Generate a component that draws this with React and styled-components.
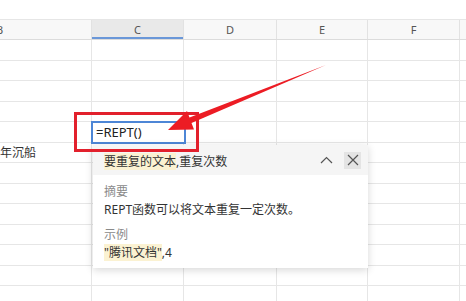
import React from "react";
import styled, { createGlobalStyle } from "styled-components";

const GlobalStyle = createGlobalStyle`
  html, body {
    margin: 0;
    background: #fff;
    font-family: "Noto Sans", "Noto Sans CJK SC", sans-serif;
  }
`;

const COLUMNS = ["B", "C", "D", "E", "F", "G"];
const TEMPLATE = "184px 92px 93px 91px 92px 92px";
const ROW_COUNT = 13;

const Page = styled.div`
  position: relative;
  width: 466px;
  height: 301px;
  padding-top: 19px;
  box-sizing: border-box;
  overflow: hidden;
`;

const Sheet = styled.div`
  display: flex;
  flex-direction: column;
  margin-left: -92px;
`;

const HeaderRow = styled.div`
  display: grid;
  grid-template-columns: ${TEMPLATE};
  height: 21px;
  box-sizing: border-box;
  border-top: 1px solid #e6e6e6;
  border-bottom: 1px solid #dcdcdc;
  background: #f8f8f8;
`;

const HeaderCell = styled.div`
  display: flex;
  align-items: center;
  justify-content: center;
  font-size: 11px;
  color: #555;
  border-right: 1px solid #e2e2e2;
  background: ${p => (p.active ? "#e9e9e9" : "transparent")};
  box-shadow: ${p => (p.active ? "inset 0 -2px 0 #6a97d8" : "none")};
`;

const Row = styled.div`
  display: grid;
  grid-template-columns: ${TEMPLATE};
  height: 20.5px;
  box-sizing: border-box;
  border-bottom: 1px solid #e6e6e6;
`;

const Cell = styled.div`
  border-right: 1px solid #e6e6e6;
  padding-left: ${p => p.indent || 4}px;
  font-size: 12px;
  line-height: 19px;
  color: #333;
  white-space: nowrap;
  overflow: hidden;
`;

const ActiveCell = styled.div`
  position: absolute;
  left: 91px;
  top: 121px;
  width: 95px;
  height: 23px;
  box-sizing: border-box;
  border: 2px solid #4d86d6;
  background: #fff;
  padding-left: 3px;
  font-size: 13px;
  line-height: 19px;
  color: #222;
`;

const RedBox = styled.div`
  position: absolute;
  left: 74px;
  top: 112px;
  width: 125px;
  height: 40px;
  box-sizing: border-box;
  border: 3px solid #e2202c;
  z-index: 3;
`;

const Arrow = styled.svg`
  position: absolute;
  left: 0;
  top: 0;
  z-index: 4;
`;

const Popup = styled.div`
  position: absolute;
  left: 93px;
  top: 145px;
  width: 275px;
  height: 123px;
  background: #fff;
  box-shadow: 0 2px 8px rgba(0, 0, 0, 0.16);
  z-index: 2;
  display: flex;
  flex-direction: column;
`;

const PopupHeader = styled.div`
  display: flex;
  align-items: center;
  height: 30px;
  padding: 0 7px 0 11px;
  background: #f5f5f5;
  font-size: 12px;
  color: #333;
`;

const Signature = styled.div`
  flex: 1;
  padding-top: 2px;
`;

const Mark = styled.span`
  background: #fbf2d2;
`;

const IconButton = styled.div`
  width: 17px;
  height: 17px;
  display: flex;
  align-items: center;
  justify-content: center;
  margin-left: ${p => p.gap || 0}px;
  background: ${p => (p.filled ? "#e4e4e4" : "transparent")};
`;

const PopupBody = styled.div`
  display: flex;
  flex-direction: column;
  padding: 8px 11px 0;
  font-size: 12px;
  line-height: 18px;
`;

const Label = styled.div`
  color: #8a8a8a;
  margin-top: ${p => p.gap || 0}px;
`;

const Text = styled.div`
  color: #333;
`;

const App = () => {
  const rows = Array.from({ length: ROW_COUNT }, (_, i) => i);

  return (
    <>
      <GlobalStyle />
      <Page>
        <Sheet>
          <HeaderRow>
            {COLUMNS.map(col => (
              <HeaderCell key={col} active={col === "C"}>
                {col === "G" ? "" : col}
              </HeaderCell>
            ))}
          </HeaderRow>
          {rows.map(r => (
            <Row key={r}>
              {COLUMNS.map(col => (
                <Cell key={col} indent={col === "B" ? 92 : 4}>
                  {col === "B" && r === 5 ? "年沉船" : ""}
                </Cell>
              ))}
            </Row>
          ))}
        </Sheet>

        <ActiveCell>=REPT()</ActiveCell>
        <RedBox />

        <Arrow width="466" height="301" viewBox="0 0 466 301">
          <polygon
            points="168,130 187,111 189.5,117.5 326,65 191.5,123 194,129.5"
            fill="#ec1c24"
          />
        </Arrow>

        <Popup>
          <PopupHeader>
            <Signature>
              <Mark>要重复的文本</Mark>,重复次数
            </Signature>
            <IconButton>
              <svg width="13" height="8" viewBox="0 0 13 8">
                <polyline
                  points="1,7 6.5,1.5 12,7"
                  fill="none"
                  stroke="#555"
                  strokeWidth="1.2"
                />
              </svg>
            </IconButton>
            <IconButton filled gap={9}>
              <svg width="12" height="12" viewBox="0 0 12 12">
                <path
                  d="M1 1 L11 11 M11 1 L1 11"
                  stroke="#555"
                  strokeWidth="1.2"
                />
              </svg>
            </IconButton>
          </PopupHeader>
          <PopupBody>
            <Label>摘要</Label>
            <Text>REPT函数可以将文本重复一定次数。</Text>
            <Label gap={7}>示例</Label>
            <Text>
              <Mark>"腾讯文档"</Mark>,4
            </Text>
          </PopupBody>
        </Popup>
      </Page>
    </>
  );
};

export default App;
